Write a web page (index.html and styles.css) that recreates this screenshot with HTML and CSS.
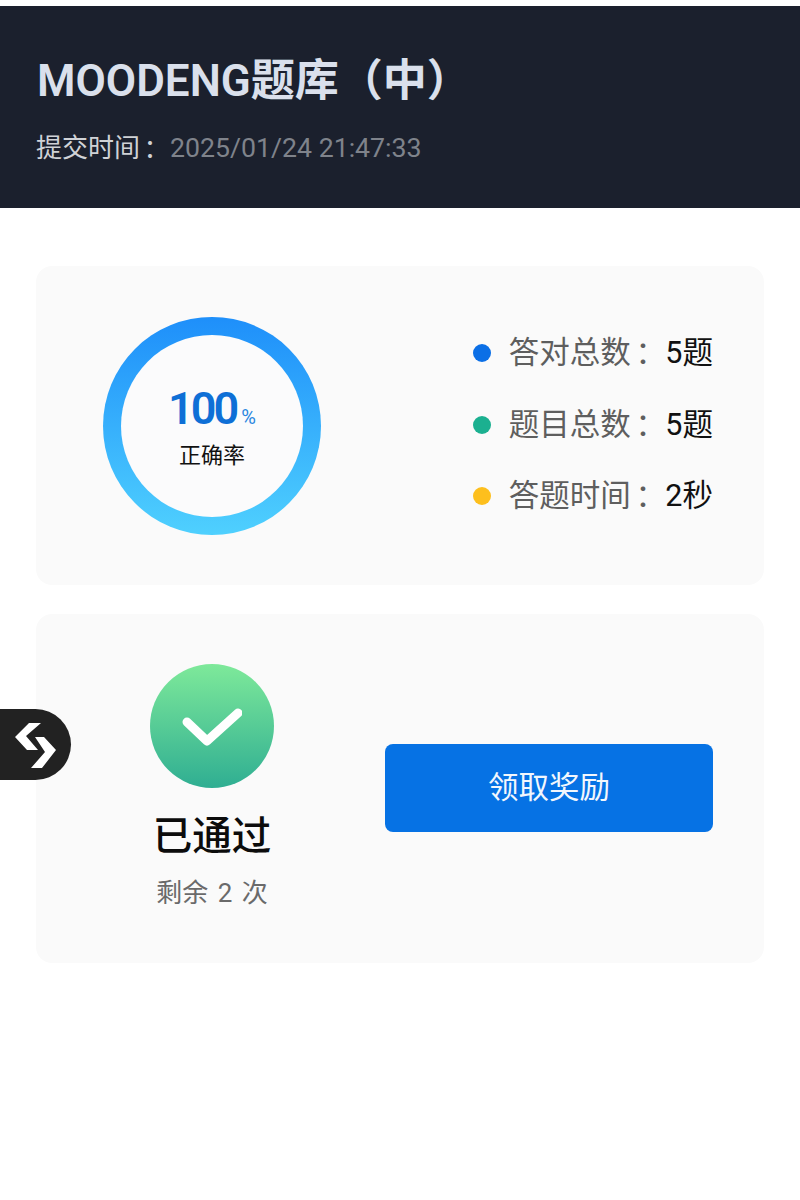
FILE: index.html
```html
<!DOCTYPE html>
<html lang="zh-CN">

<head>
    <meta charset="UTF-8">
    <meta name="viewport" content="width=device-width, initial-scale=1.0">
    <title>MOODENG题库（中）</title>
    <link rel="stylesheet" href="styles.css">
</head>

<body>
    <header class="header">
        <h1 class="title">MOODENG题库（中）</h1>
        <div class="submit-time">提交时间<span class="colon" lang="zh-TW">：</span><span class="time-value">2025/01/24 21:47:33</span></div>
    </header>

    <main class="content">
        <section class="card score-card">
            <div class="ring">
                <div class="ring-inner">
                    <div class="percent">100<span class="percent-sign">%</span></div>
                    <div class="ring-label">正确率</div>
                </div>
            </div>
            <ul class="stats">
                <li class="stat"><span class="dot dot-blue"></span><span class="stat-name">答对总数<span class="colon" lang="zh-TW">：</span></span><span class="stat-value">5题</span></li>
                <li class="stat"><span class="dot dot-green"></span><span class="stat-name">题目总数<span class="colon" lang="zh-TW">：</span></span><span class="stat-value">5题</span></li>
                <li class="stat"><span class="dot dot-yellow"></span><span class="stat-name">答题时间<span class="colon" lang="zh-TW">：</span></span><span class="stat-value">2秒</span></li>
            </ul>
        </section>

        <section class="card result-card">
            <div class="result">
                <div class="check-circle">
                    <svg width="60" height="42" viewBox="0 0 60 42">
                        <path d="M5 17 L25 36 L56 8" fill="none" stroke="#fff" stroke-width="9" stroke-linecap="round" stroke-linejoin="round" />
                    </svg>
                </div>
                <div class="result-title">已通过</div>
                <div class="result-left">剩余 2 次</div>
            </div>
            <button class="reward-button">领取奖励</button>
        </section>
    </main>

    <div class="float-tab">
        <svg width="44" height="50" viewBox="15 720 44 50">
            <path d="M29 723 L41 723 L26 736 L38 750 L27 750 L15 737 Z" fill="#fff" />
            <path d="M35 737 L44 737 L56 750 L42 768 L31 768 L45 752 Z" fill="#fff" />
        </svg>
    </div>
</body>

</html>
```

FILE: styles.css
```css
* {
    box-sizing: border-box;
}

body {
    margin: 0;
    padding-top: 6px;
    position: relative;
    min-height: 1200px;
    background-color: #fff;
    font-family: Roboto, "Noto Sans CJK SC", sans-serif;
}

/* the TC face has the colon centred in its box */
.colon {
    margin: 0 3px 0 -3px;
    font-family: "Noto Sans CJK TC", sans-serif;
    line-height: 0;
    vertical-align: -2px;
}

.header {
    height: 202px;
    padding: 45px 36px 0;
    background-color: #1b202d;
}

.title {
    margin: 0 0 0 1px;
    font-size: 44px;
    line-height: 60px;
    font-weight: 600;
    color: #dae0ec;
    white-space: nowrap;
}

.submit-time {
    margin-top: 19px;
    font-size: 26px;
    line-height: 36px;
    color: #d0d2d6;
}

.time-value {
    margin-left: 4px;
    font-size: 26.7px;
    color: #7f838b;
}

.content {
    display: flex;
    flex-direction: column;
    gap: 29px;
    padding: 58px 36px 0;
}

.card {
    display: flex;
    background-color: #fafafa;
    border-radius: 16px;
}

.score-card {
    height: 319px;
    padding: 51px 51px 0 67px;
    justify-content: space-between;
}

.ring {
    width: 218px;
    height: 218px;
    padding: 18px;
    border-radius: 50%;
    background: linear-gradient(180deg, #1e8ffa, #4fd0fe);
}

.ring-inner {
    display: flex;
    flex-direction: column;
    align-items: center;
    height: 100%;
    padding-top: 49px;
    border-radius: 50%;
    background-color: #fbfbfc;
}

.percent {
    font-size: 45px;
    line-height: 50px;
    font-weight: 600;
    letter-spacing: -3px;
    color: #0e6fd6;
}

.percent-sign {
    margin-left: 5px;
    font-size: 20px;
    font-weight: 400;
    letter-spacing: 0;
    color: #2a86e0;
}

.ring-label {
    margin-top: -1px;
    font-size: 22px;
    line-height: 30px;
    color: #111;
}

.stats {
    display: flex;
    flex-direction: column;
    gap: 31.5px;
    margin: 0;
    padding: 16px 0 0;
    list-style: none;
}

.stat {
    display: flex;
    align-items: center;
    height: 40px;
    font-size: 30.5px;
    line-height: 40px;
}

.dot {
    width: 18px;
    height: 18px;
    margin-right: 18px;
    border-radius: 50%;
}

.dot-blue {
    background-color: #0b6fe6;
}

.dot-green {
    background-color: #1bb090;
}

.dot-yellow {
    background-color: #fdbf1d;
}

.stat-name {
    color: #5e5e5e;
}

.stat-value {
    margin-left: 4px;
    color: #111;
}

.result-card {
    height: 349px;
    padding: 50px 51px 0 100px;
    justify-content: space-between;
}

.result {
    display: flex;
    flex-direction: column;
    align-items: center;
    width: 152px;
}

.check-circle {
    display: flex;
    align-items: center;
    justify-content: center;
    width: 124px;
    height: 124px;
    border-radius: 50%;
    background: linear-gradient(180deg, #7ee99a, #2fae92);
}

.result-title {
    margin-top: 25px;
    font-size: 39.5px;
    line-height: 48px;
    font-weight: 500;
    color: #0c0c0c;
}

.result-left {
    margin-top: 15px;
    font-size: 26px;
    line-height: 34px;
    word-spacing: 3px;
    color: #6a6a6a;
    white-space: nowrap;
}

.reward-button {
    width: 328px;
    height: 88px;
    margin-top: 80px;
    padding: 0 0 7px;
    border: none;
    border-radius: 8px;
    background-color: #0672e4;
    color: #f2f7fd;
    font-family: inherit;
    font-size: 30.5px;
}

/* floating tab stuck to the left edge */
.float-tab {
    position: absolute;
    left: 0;
    top: 709px;
    display: flex;
    align-items: center;
    justify-content: center;
    width: 71px;
    height: 71px;
    padding-left: 3px;
    border-radius: 0 36px 36px 0;
    background-color: #222;
}
```
